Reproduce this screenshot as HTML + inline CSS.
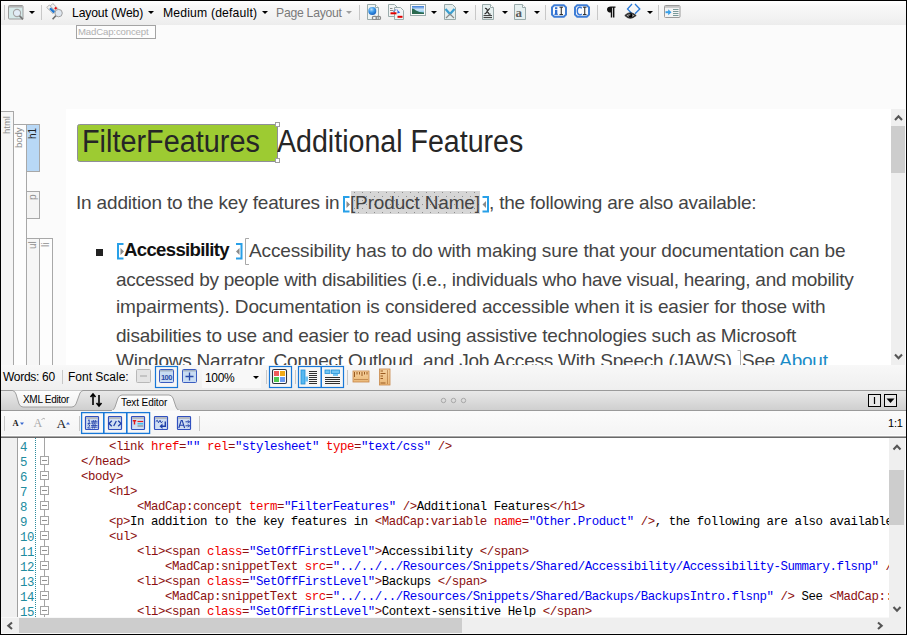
<!DOCTYPE html>
<html><head><meta charset="utf-8">
<style>
*{box-sizing:border-box}
html,body{margin:0;padding:0}
body{width:907px;height:635px;overflow:hidden;position:relative;background:#fbfbfb;font-family:"Liberation Sans",sans-serif;}
.a{position:absolute}
.t{position:absolute;white-space:pre;line-height:1}
.sep{position:absolute;width:1px;background:#c8c8c8}
.dd{position:absolute;width:0;height:0;border-left:3px solid transparent;border-right:3px solid transparent;border-top:3px solid #000}
.p{font-size:19px;color:#444}
.cl{position:absolute;left:53px;font-family:"Liberation Mono",monospace;font-size:12.4px;letter-spacing:-0.44px;white-space:pre;line-height:15px;color:#000}
.tg{color:#8c1010}.at{color:#f00000}.v{color:#0000f0}
.ln{position:absolute;left:20px;font-family:"Liberation Mono",monospace;font-size:12.4px;letter-spacing:-0.44px;color:#218b9e;line-height:15px;white-space:pre}
.fb{position:absolute;left:40px;width:9px;height:9px;border:1px solid #a5a5a5;background:#fff}
.fb:after{content:"";position:absolute;left:1px;top:3px;width:5px;height:1px;background:#909090}
svg{position:absolute;overflow:visible}
</style></head><body>

<!-- ============ top toolbar ============ -->
<div class="a" style="left:0;top:0;width:907px;height:25px;background:linear-gradient(#fefefe 0px,#fefefe 2px,#f8f8f8 6px,#f3f3f3 16px,#eeeeee 23px,#ececec 25px)"></div>
<div class="sep" style="left:4px;top:5px;height:15px"></div>
<!-- magnifier window icon -->
<svg style="left:8px;top:5px" width="16" height="15" viewBox="0 0 16 15">
  <rect x="0.5" y="0.5" width="14.5" height="13.5" rx="1" fill="#d6eaea" stroke="#9a9a9a"/>
  <rect x="1" y="1" width="13.5" height="1.6" fill="#b4b4b4"/>
  <circle cx="9" cy="8" r="3.6" fill="#e2ecf6" stroke="#a4a4a4" stroke-width="1.1"/>
  <line x1="11.6" y1="10.8" x2="15" y2="14.3" stroke="#777" stroke-width="1.8"/>
</svg>
<div class="dd" style="left:29px;top:11px"></div>
<div class="sep" style="left:41px;top:5px;height:15px"></div>
<!-- highlighter magnifier icon -->
<svg style="left:46px;top:3px" width="18" height="18" viewBox="0 0 18 18">
  <path d="M0.8 4.5 L3.3 2 L9.5 8.2 L7 10.7 Z" fill="#f2f2f2" stroke="#a8a8a8" stroke-width="0.9"/>
  <path d="M4.3 3 L6.8 0.5 L12.5 6.2 L10 8.7 Z" fill="#f2f2f2" stroke="#a8a8a8" stroke-width="0.9"/>
  <path d="M3.2 6 L4.8 4.4 L9 8.6 L7.4 10.2 Z" fill="#1e78d4"/>
  <rect x="8.6" y="4.2" width="2.2" height="2.2" fill="#e41010" transform="rotate(45 9.7 5.3)"/>
  <circle cx="12.6" cy="10.1" r="3.7" fill="#dfe7f0" stroke="#a0a0a0" stroke-width="1"/>
  <line x1="9.8" y1="12.8" x2="6.6" y2="16.2" stroke="#6a6a6a" stroke-width="1.6"/>
</svg>
<div class="t" style="left:72px;top:7px;font-size:12.2px;letter-spacing:-0.15px;color:#000">Layout (Web)</div>
<div class="dd" style="left:148px;top:11px"></div>
<div class="t" style="left:163px;top:7px;font-size:12.2px;letter-spacing:0.17px;color:#000">Medium (default)</div>
<div class="dd" style="left:262px;top:11px"></div>
<div class="t" style="left:276px;top:7px;font-size:12.2px;letter-spacing:-0.25px;color:#7a7a7a">Page Layout</div>
<div class="dd" style="left:346px;top:11px;border-top-color:#a0a0a0"></div>
<div class="sep" style="left:359px;top:5px;height:15px"></div>
<!-- page globe -->
<svg style="left:367px;top:4px" width="15" height="16" viewBox="0 0 15 16">
  <defs><radialGradient id="glb" cx="0.4" cy="0.3" r="0.7"><stop offset="0" stop-color="#b8e0fa"/><stop offset="0.5" stop-color="#3a98e8"/><stop offset="1" stop-color="#1a64c0"/></radialGradient></defs>
  <path d="M0.5 0.5 H8.5 L11.5 3.5 V15.5 H0.5 Z" fill="#eef4f4" stroke="#9aabab"/>
  <path d="M8.5 0.5 V3.5 H11.5" fill="#fff" stroke="#9aabab"/>
  <circle cx="5.3" cy="7" r="4" fill="url(#glb)"/>
  <rect x="5.3" y="12.3" width="4.6" height="3.2" rx="1.6" fill="none" stroke="#8a8a8a" stroke-width="1.2"/>
  <rect x="9" y="12.3" width="4.6" height="3.2" rx="1.6" fill="none" stroke="#8a8a8a" stroke-width="1.2"/>
</svg>
<!-- two pages with red -->
<svg style="left:388px;top:4px" width="17" height="16" viewBox="0 0 17 16">
  <path d="M0.5 0.5 H6.5 L9 3 V12.5 H0.5 Z" fill="#f2f4f4" stroke="#9aabab"/>
  <path d="M6.5 3.5 H12.5 L15.5 6.5 V15.5 H6.5 Z" fill="#f2f4f4" stroke="#9aabab"/>
  <rect x="2" y="4" width="2.5" height="0.9" fill="#808080"/>
  <rect x="2" y="6" width="3.5" height="0.9" fill="#808080"/>
  <rect x="2.5" y="8.3" width="6" height="2" fill="#e00000"/>
  <rect x="9.5" y="11.8" width="5" height="2" fill="#e00000"/>
  <path d="M5.5 8 Q8 4 10.5 7.2" fill="none" stroke="#2a5ee0" stroke-width="1" stroke-dasharray="1.3 0.8"/>
  <path d="M9.6 6.2 L12.2 8.6 L9.4 9.4 Z" fill="#2a5ee0"/>
</svg>
<!-- image -->
<svg style="left:410px;top:4px" width="16" height="12" viewBox="0 0 16 12">
  <defs><linearGradient id="sky" x1="0" y1="0" x2="0" y2="1"><stop offset="0" stop-color="#3a7ad8"/><stop offset="0.45" stop-color="#d0e8f8"/><stop offset="1" stop-color="#60b8e8"/></linearGradient></defs>
  <rect x="0.5" y="0.5" width="15" height="11" fill="#fafafa" stroke="#9aabab"/>
  <rect x="2" y="2" width="12" height="8" fill="url(#sky)"/>
  <path d="M2 4.5 Q4 4.5 6 6.5 Q9 8.5 14 8.5 V10 H2 Z" fill="#2a6a50"/>
</svg>
<div class="dd" style="left:431px;top:11px"></div>
<!-- page X -->
<svg style="left:444px;top:4px" width="13" height="16" viewBox="0 0 13 16">
  <path d="M0.5 0.5 H8.5 L11.5 3.5 V15.5 H0.5 Z" fill="#e4eeee" stroke="#98a8a8"/>
  <path d="M1.5 5 L6 10 L10.5 5" fill="none" stroke="#3a9ed0" stroke-width="2.2"/>
  <path d="M2 14 L6 10 L10 14" fill="none" stroke="#8a8a8a" stroke-width="1.2"/>
</svg>
<div class="dd" style="left:463px;top:11px"></div>
<div class="sep" style="left:475px;top:5px;height:15px"></div>
<!-- page x -->
<svg style="left:482px;top:4px" width="13" height="16" viewBox="0 0 13 16">
  <path d="M0.5 0.5 H8.5 L11.5 3.5 V15.5 H0.5 Z" fill="#e6f0f0" stroke="#9aabab"/>
  <path d="M8.5 0.5 V3.5 H11.5" fill="#fff" stroke="#9aabab"/>
  <path d="M3 4.5 Q4.5 4 5.2 6 L6.5 9.5 Q7 10.5 8.5 9.8 M8 4.5 Q7 4.8 6 6.5 L4 9 Q3.5 10 2.5 9.5" fill="none" stroke="#333" stroke-width="1.3"/>
  <rect x="1.5" y="11" width="8.5" height="1.1" fill="#444"/>
  <rect x="1.5" y="13" width="8.5" height="1.1" fill="#444"/>
</svg>
<div class="dd" style="left:502px;top:11px"></div>
<!-- page a -->
<svg style="left:514px;top:4px" width="13" height="16" viewBox="0 0 13 16">
  <path d="M0.5 0.5 H8.5 L11.5 3.5 V15.5 H0.5 Z" fill="#e6f0f0" stroke="#9aabab"/>
  <path d="M8.5 0.5 V3.5 H11.5" fill="#fff" stroke="#9aabab"/>
  <text x="1.6" y="12.8" font-family="Liberation Serif" font-size="13" font-weight="bold" fill="#5a5a5a">a</text>
</svg>
<div class="dd" style="left:534px;top:11px"></div>
<div class="sep" style="left:545px;top:5px;height:15px"></div>
<!-- iI -->
<svg style="left:551px;top:4px" width="17" height="14" viewBox="0 0 17 14">
  <path d="M3.2 1.2 H12.8 L15 3.4 V10.6 L12.8 12.8 H3.2 L1 10.6 V3.4 Z" fill="#fbfbfb" stroke="#3f7ed6" stroke-width="2"/>
  <rect x="4" y="3.2" width="2.3" height="1.8" fill="#2f6fd0"/>
  <rect x="4" y="5.8" width="2.3" height="4.8" fill="#2f6fd0"/>
  <rect x="3.3" y="9.8" width="3.6" height="1" fill="#2f6fd0"/>
  <path d="M8.5 3.2 H12 M10.25 3.2 V10.6 M8.5 10.6 H12" stroke="#222" stroke-width="1" fill="none"/>
</svg>
<!-- CI -->
<svg style="left:574px;top:4px" width="17" height="14" viewBox="0 0 17 14">
  <path d="M3.2 1.2 H12.8 L15 3.4 V10.6 L12.8 12.8 H3.2 L1 10.6 V3.4 Z" fill="#fbfbfb" stroke="#3f7ed6" stroke-width="2"/>
  <path d="M7.8 4.2 Q7 3.2 5.5 3.3 Q3.3 3.6 3.3 7 Q3.3 10.5 5.6 10.7 Q7.1 10.8 7.8 9.8" fill="none" stroke="#3a78d8" stroke-width="1.4"/>
  <path d="M9 3.2 H12.5 M10.75 3.2 V10.6 M9 10.6 H12.5" stroke="#222" stroke-width="1" fill="none"/>
</svg>
<div class="sep" style="left:597px;top:5px;height:15px"></div>
<!-- pilcrow -->
<svg style="left:606px;top:6px" width="10" height="12" viewBox="0 0 10 12">
  <path d="M5 0.5 H9.5 V1.8 H8.4 V11.5 H7 V1.8 H6.2 V11.5 H4.8 V6.6 Q1 6.6 1 3.5 Q1 0.5 5 0.5 Z" fill="#111"/>
</svg>
<!-- eye -->
<svg style="left:624px;top:3px" width="18" height="17" viewBox="0 0 18 17">
  <path d="M8 1 L3.5 6 L8 10.8 M11 1 L15.8 6 L11 10.8" fill="none" stroke="#2a7ad8" stroke-width="1.3"/>
  <path d="M0.8 12.5 Q6 7 12.2 12.5 Q6 18 0.8 12.5 Z" fill="#3a3a3a" stroke="#1a1a1a" stroke-width="0.8"/>
  <path d="M2.8 12.5 Q6.5 9.5 10.2 12.5 Q6.5 15.3 2.8 12.5 Z" fill="#dcdcdc"/>
  <circle cx="6.5" cy="12.4" r="2" fill="#000"/>
  <circle cx="5.8" cy="11.8" r="0.6" fill="#fff"/>
</svg>
<div class="dd" style="left:647px;top:11px"></div>
<div class="sep" style="left:658px;top:5px;height:15px"></div>
<!-- window with arrow -->
<svg style="left:664px;top:5px" width="17" height="13" viewBox="0 0 17 13">
  <rect x="0.5" y="0.5" width="15.5" height="12" rx="1" fill="#f4f4f4" stroke="#9a9a9a"/>
  <rect x="1" y="1" width="14.5" height="1.8" fill="#c4c4c4"/>
  <path d="M1.5 7.2 H5.5" stroke="#3aa0e8" stroke-width="2"/>
  <path d="M4.2 4.2 L7.5 7.2 L4.2 10.2 Z" fill="#3aa0e8"/>
  <path d="M9 4.5 H14.5 M9 6.5 H14.5 M9 8.5 H14.5 M9 10.5 H14.5" stroke="#7a9a9a" stroke-width="1"/>
</svg>

<!-- concept label -->
<div class="a" style="left:76px;top:25px;width:80px;height:14px;border:1px solid #a4a4a4;background:#fdfdfd"></div>
<div class="t" style="left:78px;top:27px;font-size:9.6px;letter-spacing:-0.15px;color:#b0b0b0">MadCap:concept</div>

<!-- ============ structure bars ============ -->
<div class="a" style="left:1px;top:111px;width:13px;height:254px;border-right:1px solid #a8a8a8;border-top:1px solid #a8a8a8;background:#f6f6f6"></div>
<div class="a" style="left:13px;top:124px;width:14px;height:241px;border:1px solid #a8a8a8;border-bottom:none;background:#fdfdfd"></div>
<div class="a" style="left:26px;top:124px;width:14px;height:48px;border:1px solid #a8a8a8;background:#b8d8f6"></div>
<div class="a" style="left:26px;top:191px;width:14px;height:28px;border:1px solid #a8a8a8;background:#f4f4f4"></div>
<div class="a" style="left:26px;top:238px;width:14px;height:127px;border:1px solid #a8a8a8;border-bottom:none;background:#f6f6f6"></div>
<div class="a" style="left:39px;top:238px;width:14px;height:127px;border:1px solid #a8a8a8;border-bottom:none;background:#fdfdfd"></div>
<div class="t" style="left:2px;top:134px;font-size:9.5px;color:#8a8a8a;transform:rotate(-90deg);transform-origin:0 0">html</div>
<div class="t" style="left:14px;top:148px;font-size:9.5px;color:#8a8a8a;transform:rotate(-90deg);transform-origin:0 0">body</div>
<div class="t" style="left:28px;top:139px;font-size:10px;color:#222;transform:rotate(-90deg);transform-origin:0 0">h1</div>
<div class="t" style="left:28px;top:200px;font-size:10px;color:#909090;transform:rotate(-90deg);transform-origin:0 0">p</div>
<div class="t" style="left:28px;top:249px;font-size:10px;color:#909090;transform:rotate(-90deg);transform-origin:0 0">ul</div>
<div class="t" style="left:41px;top:247px;font-size:10px;color:#909090;transform:rotate(-90deg);transform-origin:0 0">li</div>

<!-- ============ document ============ -->
<div class="a" style="left:66px;top:109px;width:825px;height:256px;background:#fff;overflow:hidden">
  <div class="a" style="left:11px;top:15px;width:201px;height:38px;background:#9dcb32;border:1px solid #8f8f98;border-radius:2.5px"></div>
  <div class="a" style="left:209px;top:13px;width:5px;height:5px;border:1px solid #a0a0a0;background:#fff"></div>
  <div class="a" style="left:209px;top:49px;width:5px;height:5px;border:1px solid #a0a0a0;background:#fff"></div>
  <div class="t" style="left:16px;top:17px;font-size:31px;transform:scaleX(0.93);transform-origin:0 0;color:#262626">FilterFeatures</div>
  <div class="t" style="left:211px;top:17px;font-size:31px;transform:scaleX(0.922);transform-origin:0 0;color:#262626">Additional Features</div>
  <div class="t p" style="left:10px;top:84px;letter-spacing:-0.173px">In addition to the key features in</div>
  <svg style="left:285px;top:82px" width="129" height="23"><defs><pattern id="dots" width="8" height="8" patternUnits="userSpaceOnUse"><rect x="3" y="1" width="1" height="1" fill="#8e8e8e"/><rect x="7" y="5" width="1" height="1" fill="#8e8e8e"/></pattern></defs><rect width="129" height="23" fill="#d6d6d6"/><rect width="129" height="23" fill="url(#dots)"/></svg>
  <div class="t p" style="left:284px;top:84px;letter-spacing:-0.154px">[Product Name]</div>
  <div class="t p" style="left:423px;top:84px;letter-spacing:-0.206px">, the following are also available:</div>
  <div class="a" style="left:30px;top:140px;width:7px;height:7px;background:#222"></div>
  <div class="t p" style="left:58px;top:132px;font-weight:bold;font-size:18.6px;letter-spacing:-0.67px;color:#111">Accessibility</div>
  <div class="t p" style="left:183px;top:132px;letter-spacing:-0.137px">Accessibility has to do with making sure that your documentation can be</div>
  <div class="t p" style="left:50px;top:161px;letter-spacing:-0.266px">accessed by people with disabilities (i.e., individuals who have visual, hearing, and mobility</div>
  <div class="t p" style="left:50px;top:188px;letter-spacing:-0.113px">impairments). Documentation is considered accessible when it is easier for those with</div>
  <div class="t p" style="left:50px;top:217px;letter-spacing:-0.2px">disabilities to use and easier to read using assistive technologies such as Microsoft</div>
  <div class="t p" style="left:50px;top:242px;letter-spacing:-0.219px">Windows Narrator, Connect Outloud, and Job Access With Speech (JAWS). See <span style="color:#1a8bc6">About</span></div>
  <!-- markers -->
  <svg style="left:0;top:0" width="825" height="256" viewBox="66 109 825 256">
    <path d="M349.5 197 H344 V211.5 H349.5" fill="none" stroke="#28a0e8" stroke-width="2"/>
    <path d="M346.5 201 L350 204.5 L346.5 208 Z" fill="#8a8a8a"/>
    <path d="M482.5 197 H488 V211.5 H482.5" fill="none" stroke="#28a0e8" stroke-width="2"/>
    <path d="M486 201 L482.5 204.5 L486 208 Z" fill="#8a8a8a"/>
    <path d="M123.5 244 H118 V258.5 H123.5" fill="none" stroke="#28a0e8" stroke-width="2"/>
    <path d="M120.5 248 L124 251.5 L120.5 255 Z" fill="#8a8a8a"/>
    <path d="M236 244 H241.5 V258.5 H236" fill="none" stroke="#28a0e8" stroke-width="2"/>
    <path d="M239.5 248 L236 251.5 L239.5 255 Z" fill="#8a8a8a"/>
    <path d="M249 238.5 H245.5 V264.5 H249" fill="none" stroke="#a8a8a8" stroke-width="1"/>
    <path d="M737.5 350.5 H740.5 V370" fill="none" stroke="#a8a8a8" stroke-width="1"/>
  </svg>
</div>
<!-- doc scrollbar -->
<div class="a" style="left:891px;top:109px;width:14px;height:256px;background:#efefef"></div>
<div class="a" style="left:891px;top:126px;width:14px;height:47px;background:#cdcdcd"></div>
<svg style="left:885px;top:105px" width="22" height="265" viewBox="885 105 22 265">
  <path d="M895 120 L898.5 116.3 L902 120" fill="none" stroke="#555" stroke-width="2.1"/>
  <path d="M895 354.5 L898.5 358.2 L902 354.5" fill="none" stroke="#555" stroke-width="2.1"/>
</svg>
<!-- ============ status bar ============ -->
<div class="a" style="left:0;top:365px;width:907px;height:25px;background:linear-gradient(#f8f8f8,#efefef)"></div>
<div class="t" style="left:3px;top:371px;font-size:12px;letter-spacing:-0.3px;color:#000">Words: 60</div>
<div class="sep" style="left:62px;top:370px;height:14px"></div>
<div class="t" style="left:68px;top:371px;font-size:12px;letter-spacing:0px;color:#000">Font Scale:</div>
<svg style="left:130px;top:364px" width="270" height="26" viewBox="130 364 270 26">
  <defs>
    <linearGradient id="rul" x1="0" y1="0" x2="0" y2="1"><stop offset="0" stop-color="#f6d2a0"/><stop offset="1" stop-color="#eab878"/></linearGradient>
  </defs>
  <!-- minus disabled -->
  <rect x="136.5" y="369.5" width="14" height="13" rx="1" fill="#e4e4e4" stroke="#b8b8b8"/>
  <line x1="140" y1="376" x2="147" y2="376" stroke="#b0b0b0" stroke-width="1.2"/>
  <!-- 100 selected -->
  <rect x="155.5" y="366.5" width="22" height="21" fill="#f6f6f6" stroke="#1878d8" stroke-width="1.2"/>
  <rect x="159.5" y="369.5" width="14" height="13" rx="1" fill="#c8dcf2" stroke="#3a5cc0"/>
  <line x1="160" y1="370.8" x2="173" y2="370.8" stroke="#9aa8b8" stroke-width="1.2"/>
  <text x="161" y="380" font-family="Liberation Sans" font-size="7.5" font-weight="bold" fill="#2a4aa8" letter-spacing="-0.6">100</text>
  <!-- plus -->
  <rect x="182.5" y="369.5" width="14" height="13" rx="1" fill="#c8dcf2" stroke="#3a5cc0"/>
  <line x1="183" y1="370.8" x2="196" y2="370.8" stroke="#9aa8b8" stroke-width="1.2"/>
  <path d="M189.5 372.5 V380.5 M185.5 376.5 H193.5" stroke="#2a4aa8" stroke-width="1.3"/>
  <!-- combo -->
  <rect x="202" y="367" width="59" height="21" fill="#f8f8f8"/>
  <path d="M253 376 H259 L256 379 Z" fill="#000"/>
  <!-- sep -->
  <rect x="266" y="370" width="1" height="14" fill="#c8c8c8"/>
  <!-- grid -->
  <rect x="269.5" y="366.5" width="22" height="21" fill="#f6f6f6" stroke="#1878d8" stroke-width="1.2"/>
  <rect x="272.5" y="369.5" width="14" height="14" rx="1.5" fill="#fff" stroke="#2a3040" stroke-width="1.1"/>
  <rect x="274" y="371" width="5" height="5" fill="#f05a5a"/>
  <rect x="280" y="371" width="5" height="5" fill="#f0a818"/>
  <rect x="274" y="377" width="5" height="5" fill="#50c850"/>
  <rect x="280" y="377" width="5" height="5" fill="#6a9af0"/>
  <rect x="295" y="370" width="1" height="14" fill="#c8c8c8"/>
  <!-- layout group -->
  <rect x="298.5" y="366.5" width="45" height="21" fill="#f6f6f6" stroke="#1878d8" stroke-width="1.2"/>
  <rect x="320.5" y="366.5" width="1.5" height="21" fill="#1878d8"/>
  <rect x="301" y="370" width="4" height="14" fill="#58b8f0" stroke="#2090d8" stroke-width="0.8"/>
  <rect x="305" y="376.5" width="3" height="5" fill="#70c0f0"/>
  <path d="M309 371.5 H317 M309 373.5 H317 M309 375.5 H317 M309 377.5 H317 M309 379.5 H317 M309 381.5 H317 M309 383.5 H317" stroke="#303030" stroke-width="1"/>
  <rect x="325" y="370" width="5" height="3.5" fill="#70c4f2" stroke="#2090d8" stroke-width="0.8"/>
  <rect x="331.5" y="370" width="8" height="3.5" fill="#70c4f2" stroke="#2090d8" stroke-width="0.8"/>
  <rect x="333" y="374" width="5" height="2" fill="#70c4f2"/>
  <path d="M325 377.5 H340 M325 379.5 H340 M325 381.5 H340 M325 383.5 H340" stroke="#303030" stroke-width="1"/>
  <rect x="347" y="370" width="1" height="15" fill="#c8c8c8"/>
  <!-- rulers -->
  <rect x="353" y="371" width="16" height="11" fill="url(#rul)" stroke="#c8884a" stroke-width="0.8"/>
  <path d="M354.5 372 V377 M357 372 V374.5 M359.5 372 V374.5 M362 372 V376 M364.5 372 V374.5 M367 372 V374.5" stroke="#9a5a20" stroke-width="1"/>
  <path d="M354.5 379.5 H368" stroke="#9a5a20" stroke-width="1" stroke-dasharray="1 1"/>
  <rect x="379.5" y="369" width="10.5" height="16" fill="url(#rul)" stroke="#c8884a" stroke-width="0.8"/>
  <path d="M380.5 371 H383 M380.5 373.5 H385.5 M380.5 376 H383 M380.5 378.5 H383 M380.5 383 H385.5" stroke="#9a5a20" stroke-width="1"/>
  <path d="M387.5 370.5 V384" stroke="#9a5a20" stroke-width="1" stroke-dasharray="1 1"/>
</svg>
<div class="t" style="left:205px;top:372px;font-size:12px;letter-spacing:-0.3px;color:#000">100%</div>

<!-- ============ tab bar ============ -->
<svg style="left:0;top:389px" width="907" height="23" viewBox="0 0 907 23">
  <defs>
    <linearGradient id="band" x1="0" y1="0" x2="0" y2="1"><stop offset="0" stop-color="#eaeaea"/><stop offset="1" stop-color="#cecece"/></linearGradient>
    <linearGradient id="tabw" x1="0" y1="0" x2="0" y2="1"><stop offset="0" stop-color="#fdfdfd"/><stop offset="1" stop-color="#f2f2f2"/></linearGradient>
  </defs>
  <rect x="0" y="1" width="907" height="21" fill="url(#band)"/>
  <line x1="0" y1="1.5" x2="907" y2="1.5" stroke="#9a9a9a"/>
  <line x1="0" y1="21.5" x2="907" y2="21.5" stroke="#9a9a9a"/>
  <path d="M12.5 1.5 Q15 2 16 5 L19 15 Q20.5 18 23 18 H72 Q74.5 18 76 15 L80 4 Q81 2 83 1.5" fill="url(#tabw)" stroke="#a0a0a0"/>
  <path d="M111.5 22 Q114 21 115 18 L118 9 Q119.5 6 122 6 H169 Q171.5 6 173 9 L176 18 Q177 21 180 22 Z" fill="url(#tabw)" stroke="#a0a0a0"/>
  <rect x="112" y="21" width="68" height="2" fill="#f6f6f6"/>
  <path d="M93 5.5 V16 M90.5 8 L93 5 L95.5 8" fill="none" stroke="#000" stroke-width="1.6"/>
  <path d="M99 16.5 V6 M96.5 14 L99 17 L101.5 14" fill="none" stroke="#000" stroke-width="1.6"/>
  <circle cx="443.5" cy="11.5" r="2.2" fill="none" stroke="#a8a8a8"/>
  <circle cx="453.5" cy="11.5" r="2.2" fill="none" stroke="#a8a8a8"/>
  <circle cx="463.5" cy="11.5" r="2.2" fill="none" stroke="#a8a8a8"/>
  <rect x="868.5" y="5.5" width="12" height="12" fill="#e8e8e8" stroke="#000"/>
  <line x1="874.5" y1="8" x2="874.5" y2="15" stroke="#000" stroke-width="1.2"/>
  <rect x="884.5" y="5.5" width="12" height="12" fill="#e8e8e8" stroke="#000"/>
  <path d="M886.5 9.5 H894.5 L890.5 14 Z" fill="#000"/>
</svg>
<div class="t" style="left:23px;top:395px;font-size:10px;letter-spacing:-0.3px;color:#000">XML Editor</div>
<div class="t" style="left:121px;top:398px;font-size:10px;letter-spacing:-0.1px;color:#000">Text Editor</div>

<!-- ============ editor toolbar ============ -->
<div class="a" style="left:0;top:411px;width:907px;height:25px;background:linear-gradient(#fbfbfb,#f4f4f4)"></div>
<svg style="left:0;top:410px" width="210" height="26" viewBox="0 410 210 26">
  <rect x="4" y="416" width="1" height="15" fill="#c8c8c8"/>
  <text x="12.5" y="426" font-family="Liberation Serif" font-size="8.5" font-weight="bold" fill="#222">A</text>
  <path d="M20 422.5 H24 L22 425 Z" fill="#3a6ad0"/>
  <text x="33.5" y="427" font-family="Liberation Serif" font-size="12" fill="#a8a8a8">A</text>
  <path d="M41.5 420 Q43 417 45 419" fill="none" stroke="#a8a8a8" stroke-width="0.9"/>
  <text x="56.5" y="428" font-family="Liberation Serif" font-size="13.5" fill="#222">A</text>
  <path d="M66 424.5 H70 L68 422 Z" fill="#3a6ad0"/>
  <rect x="79" y="416" width="1" height="15" fill="#c8c8c8"/>
  <rect x="81.6" y="412.6" width="68" height="20.8" fill="#f8f8f8" stroke="#1878d8" stroke-width="1.3"/>
  <rect x="103" y="412" width="1.6" height="22" fill="#1878d8"/>
  <rect x="126" y="412" width="1.6" height="22" fill="#1878d8"/>
  <g id="win">
    <rect x="85.5" y="416.5" width="13" height="13" rx="0.8" fill="#d0def2" stroke="#3050c0" stroke-width="1.2"/>
    <line x1="86.2" y1="418" x2="97.8" y2="418" stroke="#a8a8a8" stroke-width="1.3"/>
  </g>
  <use href="#win" x="23"/>
  <use href="#win" x="46"/>
  <use href="#win" x="69"/>
  <use href="#win" x="92"/>
  <!-- icon1 -->
  <path d="M88 420.5 L89.2 419.8 V423.5 M87.6 423.5 H90.4" fill="none" stroke="#2040a8" stroke-width="0.9"/>
  <path d="M87.6 425.2 Q88.5 424.3 89.6 425 Q90 426 87.6 428 H90.5" fill="none" stroke="#2040a8" stroke-width="0.9"/>
  <path d="M91 421.3 H97.5 M91 423 H97.5 M91 425.5 H97.5 M91 427.2 H97.5" stroke="#2040a8" stroke-width="0.8"/>
  <path d="M93.5 420 L92.5 424.5 M95.5 420 L94.5 424.5 M93.5 424.3 L92.5 428.5 M95.5 424.3 L94.5 428.5" stroke="#2040a8" stroke-width="0.8"/>
  <!-- icon2 </> -->
  <path d="M111.8 420.8 L109 423.5 L111.8 426.2 M118.2 420.8 L121 423.5 L118.2 426.2 M116.3 421 L113.7 426" fill="none" stroke="#2040a8" stroke-width="1.3"/>
  <!-- icon3 -->
  <path d="M132.8 420.8 H136.2 M134.5 420.8 V424.5" stroke="#e01818" stroke-width="1.4"/>
  <path d="M137.5 421.5 H143.2" stroke="#e02020" stroke-width="1.2"/>
  <path d="M137.5 423.8 H143.2" stroke="#20b8e8" stroke-width="1.2"/>
  <path d="M137.5 426 H143.2" stroke="#888" stroke-width="1.2"/>
  <!-- icon4 -->
  <path d="M155.8 421.5 L157.3 420.3 L158.5 422.7 L160 420.3 L161.2 422.7 L162.7 421.5" fill="none" stroke="#2040a8" stroke-width="1"/>
  <path d="M165.3 421.5 V426.3 H161" fill="none" stroke="#2040a8" stroke-width="1.4"/>
  <path d="M162.5 423.5 L159.5 426.3 L162.5 429 Z" fill="#2040a8"/>
  <!-- icon5 -->
  <path d="M178.8 428 L181.2 420.5 H182.2 L184.6 428 M179.8 425.3 H183.6" fill="none" stroke="#2040a8" stroke-width="1.1"/>
  <path d="M185.5 421.8 H189.5 M188 420.3 L189.5 421.8 L188 423.3 M185.5 425.8 H189.5 M188 424.3 L189.5 425.8 L188 427.3" fill="none" stroke="#2040a8" stroke-width="1"/>
  <rect x="199" y="416" width="1" height="15" fill="#c8c8c8"/>
</svg>
<div class="t" style="left:888px;top:418px;font-size:11px;letter-spacing:-0.2px;color:#000">1:1</div>
<div class="a" style="left:0;top:435px;width:907px;height:1px;background:#fdfdfd"></div>
<div class="a" style="left:0;top:436px;width:907px;height:1px;background:#a8a8a8"></div>
<div class="a" style="left:0;top:437px;width:907px;height:1px;background:#686868"></div>

<!-- ============ code ============ -->
<div class="a" style="left:0;top:438px;width:889px;height:180px;background:#fff;overflow:hidden">

    <div class="cl" style="top:2px">        <span class="tg">&lt;link</span> <span class="at">href</span><span class="tg">=</span><span class="v">&quot;&quot;</span> <span class="at">rel</span><span class="tg">=</span><span class="v">&quot;stylesheet&quot;</span> <span class="at">type</span><span class="tg">=</span><span class="v">&quot;text/css&quot;</span> <span class="tg">/&gt;</span></div>
    <div class="cl" style="top:17px">    <span class="tg">&lt;/head</span><span class="tg">&gt;</span></div>
    <div class="cl" style="top:32px">    <span class="tg">&lt;body</span><span class="tg">&gt;</span></div>
    <div class="cl" style="top:47px">        <span class="tg">&lt;h1</span><span class="tg">&gt;</span></div>
    <div class="cl" style="top:62px">            <span class="tg">&lt;MadCap:concept</span> <span class="at">term</span><span class="tg">=</span><span class="v">&quot;FilterFeatures&quot;</span> <span class="tg">/&gt;</span>Additional Features<span class="tg">&lt;/h1</span><span class="tg">&gt;</span></div>
    <div class="cl" style="top:77px">        <span class="tg">&lt;p</span><span class="tg">&gt;</span>In addition to the key features in <span class="tg">&lt;MadCap:variable</span> <span class="at">name</span><span class="tg">=</span><span class="v">&quot;Other.Product&quot;</span> <span class="tg">/&gt;</span>, the following are also available:<span class="tg">&lt;/p</span><span class="tg">&gt;</span></div>
    <div class="cl" style="top:92px">        <span class="tg">&lt;ul</span><span class="tg">&gt;</span></div>
    <div class="cl" style="top:107px">            <span class="tg">&lt;li</span><span class="tg">&gt;</span><span class="tg">&lt;span</span> <span class="at">class</span><span class="tg">=</span><span class="v">&quot;SetOffFirstLevel&quot;</span><span class="tg">&gt;</span>Accessibility <span class="tg">&lt;/span</span><span class="tg">&gt;</span></div>
    <div class="cl" style="top:122px">                <span class="tg">&lt;MadCap:snippetText</span> <span class="at">src</span><span class="tg">=</span><span class="v">&quot;../../../Resources/Snippets/Shared/Accessibility/Accessibility-Summary.flsnp&quot;</span> <span class="tg">/&gt;</span> See</div>
    <div class="cl" style="top:137px">            <span class="tg">&lt;li</span><span class="tg">&gt;</span><span class="tg">&lt;span</span> <span class="at">class</span><span class="tg">=</span><span class="v">&quot;SetOffFirstLevel&quot;</span><span class="tg">&gt;</span>Backups <span class="tg">&lt;/span</span><span class="tg">&gt;</span></div>
    <div class="cl" style="top:152px">                <span class="tg">&lt;MadCap:snippetText</span> <span class="at">src</span><span class="tg">=</span><span class="v">&quot;../../../Resources/Snippets/Shared/Backups/BackupsIntro.flsnp&quot;</span> <span class="tg">/&gt;</span> See <span class="tg">&lt;MadCap::xref</span></div>
    <div class="cl" style="top:167px">            <span class="tg">&lt;li</span><span class="tg">&gt;</span><span class="tg">&lt;span</span> <span class="at">class</span><span class="tg">=</span><span class="v">&quot;SetOffFirstLevel&quot;</span><span class="tg">&gt;</span>Context-sensitive Help <span class="tg">&lt;/span</span><span class="tg">&gt;</span></div>
    <div class="ln" style="top:3px">4</div>
    <div class="ln" style="top:18px">5</div>
    <div class="ln" style="top:33px">6</div>
    <div class="ln" style="top:48px">7</div>
    <div class="ln" style="top:63px">8</div>
    <div class="ln" style="top:78px">9</div>
    <div class="ln" style="top:93px">10</div>
    <div class="ln" style="top:108px">11</div>
    <div class="ln" style="top:123px">12</div>
    <div class="ln" style="top:138px">13</div>
    <div class="ln" style="top:153px">14</div>
    <div class="ln" style="top:168px">15</div>
</div>
<div class="a" style="left:1px;top:438px;width:16px;height:180px;background:#f0f0f0"></div>
<div class="a" style="left:17px;top:438px;width:1px;height:180px;background:#a0a0a0"></div>
<div class="a" style="left:35px;top:438px;width:1px;height:180px;background:repeating-linear-gradient(#2b8c9c 0 1px,transparent 1px 2px)"></div>
<div class="a" style="left:44px;top:438px;width:1px;height:180px;background:#a5a5a5"></div>
<div class="fb" style="top:456px"></div>
<div class="fb" style="top:471px"></div>
<div class="fb" style="top:486px"></div>
<div class="fb" style="top:501px"></div>
<div class="fb" style="top:516px"></div>
<div class="fb" style="top:531px"></div>
<div class="fb" style="top:546px"></div>
<div class="fb" style="top:561px"></div>
<div class="fb" style="top:576px"></div>
<div class="fb" style="top:591px"></div>
<div class="fb" style="top:606px"></div>
<!-- code scrollbars -->
<div class="a" style="left:889px;top:438px;width:16px;height:180px;background:#efefef"></div>
<div class="a" style="left:889px;top:470px;width:15px;height:55px;background:#cdcdcd"></div>
<div class="a" style="left:1px;top:617px;width:905px;height:17px;background:#f8f8f8"></div>
<div class="a" style="left:2px;top:618px;width:887px;height:15px;background:#efefef"></div>
<div class="a" style="left:889px;top:617px;width:16px;height:17px;background:#efefef"></div>
<div class="a" style="left:19px;top:618px;width:443px;height:15px;background:#cdcdcd"></div>
<svg style="left:0;top:430px" width="907" height="205" viewBox="0 430 907 205">
  <path d="M893.5 449.5 L897 445.8 L900.5 449.5" fill="none" stroke="#555" stroke-width="2.1"/>
  <path d="M893.5 607 L897 610.7 L900.5 607" fill="none" stroke="#555" stroke-width="2.1"/>
  <path d="M12 622.5 L8.3 625.7 L12 629" fill="none" stroke="#555" stroke-width="2.1"/>
  <path d="M878 622.5 L881.7 625.7 L878 629" fill="none" stroke="#555" stroke-width="2.1"/>
</svg>
<!-- frame border -->
<div class="a" style="left:0;top:0;width:907px;height:1px;background:#000"></div>
<div class="a" style="left:0;top:634px;width:907px;height:1px;background:#000"></div>
<div class="a" style="left:0;top:0;width:1px;height:635px;background:#000"></div>
<div class="a" style="left:906px;top:0;width:1px;height:635px;background:#000"></div>
</body></html>
